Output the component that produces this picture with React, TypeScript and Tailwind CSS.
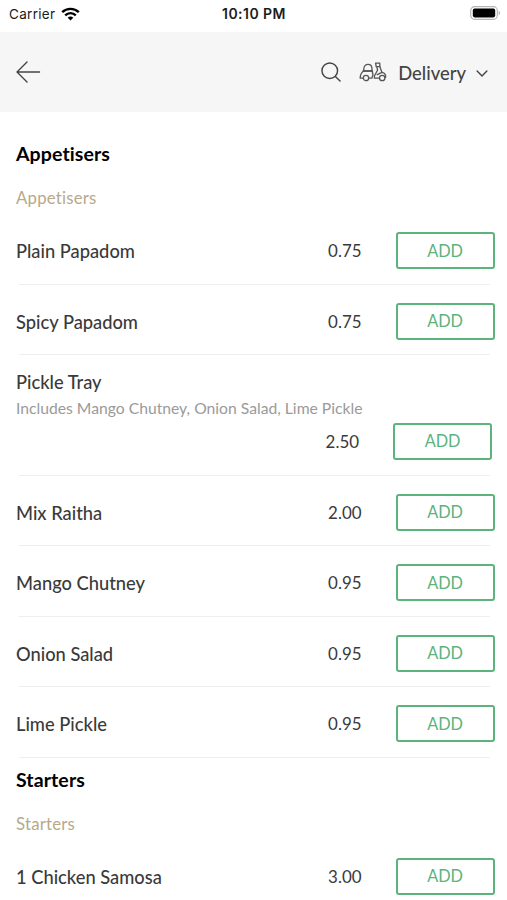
import React from 'react';
import clsx from 'clsx';

interface Item {
  name: string;
  price: string;
  note?: string;
}

interface Section {
  title: string;
  items: Item[];
}

const sections: Section[] = [
  {
    title: 'Appetisers',
    items: [
      { name: 'Plain Papadom', price: '0.75' },
      { name: 'Spicy Papadom', price: '0.75' },
      { name: 'Pickle Tray', price: '2.50', note: 'Includes Mango Chutney, Onion Salad, Lime Pickle' },
      { name: 'Mix Raitha', price: '2.00' },
      { name: 'Mango Chutney', price: '0.95' },
      { name: 'Onion Salad', price: '0.95' },
      { name: 'Lime Pickle', price: '0.95' },
    ],
  },
  {
    title: 'Starters',
    items: [{ name: '1 Chicken Samosa', price: '3.00' }],
  },
];

const StatusBar: React.FC = () => (
  <div className="grid h-8 grid-cols-3 items-start bg-white pt-[5px] font-['Inter','Liberation_Sans',sans-serif] text-[#1c1c1c]">
    <div className="flex items-center gap-[6px] pl-[9px] text-[13.5px] leading-[18px]">
      <span className="tracking-[0.3px]">Carrier</span>
      <svg width="19" height="14" viewBox="0 0 19 14" fill="none" stroke="#000" strokeWidth="2.4">
        <path d="M1.2 5.2C5.8 0.7 13.2 0.7 17.8 5.2" />
        <path d="M4.2 8.3C7.2 5.4 11.8 5.4 14.8 8.3" />
        <path d="M9.5 13.5L6.7 10.7C8.3 9.2 10.7 9.2 12.3 10.7Z" fill="#000" stroke="none" />
      </svg>
    </div>
    <div className="pl-px text-center text-[14px] leading-[18px] font-semibold tracking-[0.45px]">10:10 PM</div>
    <div className="flex justify-end pt-px pr-[6px]">
      <svg width="31" height="14" viewBox="0 0 31 14" fill="none">
        <rect x="0.7" y="0.7" width="26.6" height="12.6" rx="3.8" stroke="#b5b5b5" strokeWidth="1.2" />
        <rect x="2.8" y="2.6" width="22.4" height="8.8" rx="1.8" fill="#000" />
        <path d="M28.7 4.8C30.6 5.6 30.6 8.4 28.7 9.2Z" fill="#b0b0b0" />
      </svg>
    </div>
  </div>
);

const ScooterIcon: React.FC = () => (
  <svg width="28" height="20" viewBox="0 0 28 20" fill="none" stroke="#555" strokeWidth="1.3" strokeLinecap="round" strokeLinejoin="round">
    <path d="M4.8 9V7C4.8 4.2 6.6 2.4 9 2.4S13 4.2 13 7V9" />
    <path d="M4 9H13.4" />
    <path d="M4.2 16.2H1.2C1.2 13.4 2.4 10.6 4.6 9H13.2L14 12.8L12.8 16.2H9.8" />
    <circle cx="7" cy="16" r="2.7" />
    <path d="M16.6 1.2H20.8V4.6H17.2Z" />
    <path d="M17.8 4.8L18.6 8L15.4 14V16.2H20.4" />
    <path d="M20.8 4.6L23 10.4C25.4 11 27 12.8 26.6 15.4" />
    <path d="M18.2 12.6L23 10.4" />
    <circle cx="23.2" cy="16" r="2.7" />
  </svg>
);

const Header: React.FC = () => (
  <header className="flex h-20 items-center bg-[#f6f6f6] pl-4 text-[#444]">
    <button aria-label="Back">
      <svg width="25" height="22" viewBox="0 0 25 22" fill="none" stroke="#444" strokeWidth="1.4" strokeLinecap="round" strokeLinejoin="round">
        <path d="M11 1L1 11L11 21M1 11H23.5" />
      </svg>
    </button>
    <button aria-label="Search" className="ml-auto">
      <svg width="20" height="20" viewBox="0 0 21 21" fill="none" stroke="#444" strokeWidth="1.5" strokeLinecap="round">
        <circle cx="9.2" cy="9.2" r="8.2" />
        <path d="M15.1 15.1L20 20" />
      </svg>
    </button>
    <button className="ml-[18px] flex items-center pr-[19px]">
      <ScooterIcon />
      <span className="ml-[11px] pt-px text-[18.4px] leading-6 font-medium">Delivery</span>
      <svg className="mt-[2px] ml-[10px]" width="12" height="9" viewBox="0 0 13 9" fill="none" stroke="#444" strokeWidth="1.5" strokeLinecap="round" strokeLinejoin="round">
        <path d="M1.2 1.8L6.5 7.2L11.8 1.8" />
      </svg>
    </button>
  </header>
);

const AddButton: React.FC = () => (
  <button className="h-[37px] w-[99px] rounded-[3px] border-2 border-[#5cb37c] text-[16.3px] leading-5 tracking-[-0.1px] text-[#5cb37c]">
    ADD
  </button>
);

const MenuItem: React.FC<{ item: Item }> = ({ item }) => (
  <li>
    <div
      className={clsx(
        'flex pl-4 text-[#3a3a3a]',
        item.note ? 'h-[119.5px] flex-col pt-[14.5px] pr-[15px]' : 'h-[69.55px] items-start pt-[18.2px] pr-[12.5px]',
      )}
    >
      {item.note ? (
        <div>
          <p className="text-[18.3px] leading-6 font-medium">{item.name}</p>
          <p className="mt-[2px] text-[15.7px] leading-6 whitespace-nowrap text-[#9a9a9a]">{item.note}</p>
        </div>
      ) : (
        <p className="text-[18.3px] leading-[38px] font-medium">{item.name}</p>
      )}
      <div className={clsx('ml-auto flex items-center', item.note && 'mt-[3px]')}>
        <span className="mr-[34px] text-[16.9px] leading-[37px]">{item.price}</span>
        <AddButton />
      </div>
    </div>
    <div className="mr-[17px] ml-[19px] h-px bg-[#eee]" />
  </li>
);

const App: React.FC = () => (
  <div className="h-[900px] w-full overflow-hidden bg-white font-['Lato','Liberation_Sans',sans-serif] [font-variant-ligatures:none]">
    <StatusBar />
    <Header />
    <main className="pt-[20px]">
      {sections.map((section) => (
        <section key={section.title}>
          <div className="h-[82px] pt-[10px] pl-4">
            <h2 className="text-[19.5px] leading-6 font-bold tracking-[0.1px] text-black">{section.title}</h2>
            <h3 className="mt-5 text-[16.8px] leading-6 tracking-[0.2px] text-[#b5aa8a]">{section.title}</h3>
          </div>
          <ul>
            {section.items.map((item) => (
              <MenuItem key={item.name} item={item} />
            ))}
          </ul>
        </section>
      ))}
    </main>
  </div>
);

export default App;
